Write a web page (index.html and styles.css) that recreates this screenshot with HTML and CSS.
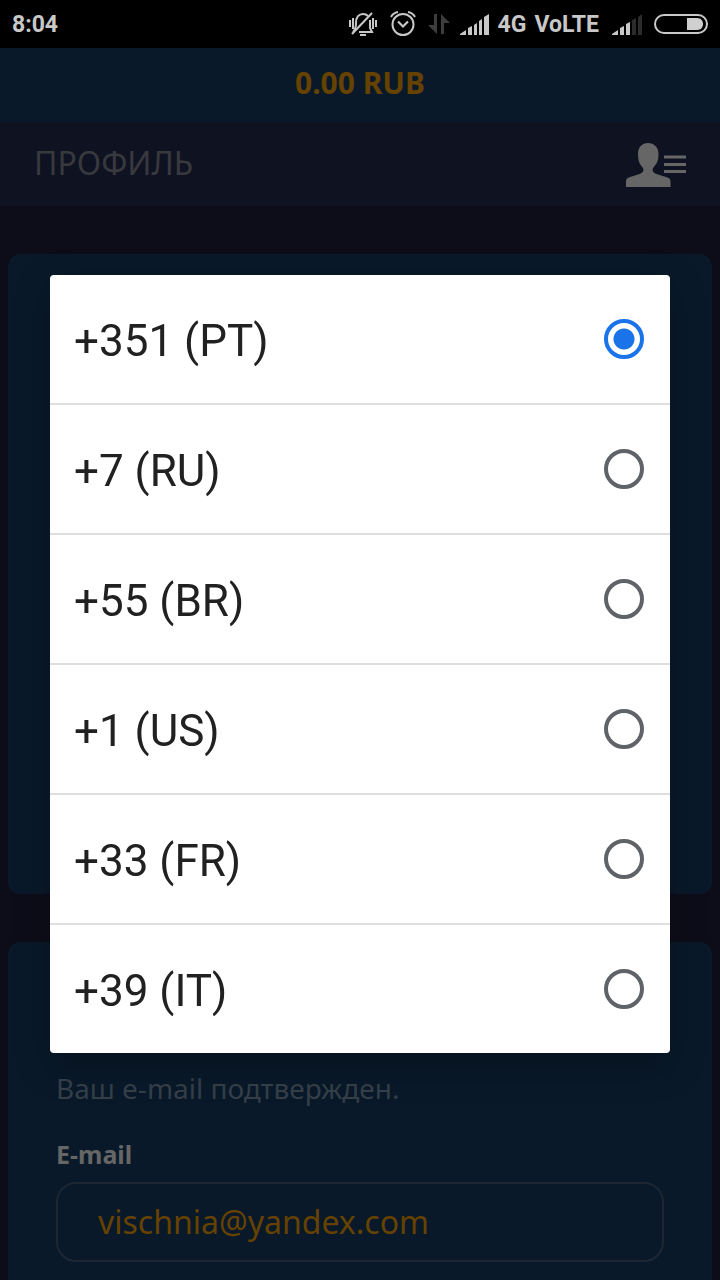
FILE: index.html
```html
<!DOCTYPE html>
<html lang="ru">
<head>
<meta charset="utf-8">
<meta name="viewport" content="width=device-width, initial-scale=1">
<title>Профиль</title>
<link rel="stylesheet" href="styles.css">
</head>
<body>
<div class="status">
  <span class="clock">8:04</span>
  <svg class="silent" width="30" height="26" viewBox="0 0 30 26" fill="none" stroke="#c8c8c8" stroke-width="2">
    <path d="M5 21C8 18 8 15 8 12C8 6 11 3 15 3C17 3 19 4 20 5M22 9V17L24 21H11"/>
    <path d="M4 23L24 2"/>
    <path d="M12 24H18M2 9V16M5 7V18M25 7V18M28 9V16"/>
  </svg>
  <svg class="alarm" width="26" height="26" viewBox="0 0 26 26" fill="none" stroke="#c8c8c8" stroke-width="2">
    <circle cx="13" cy="13.500" r="10.500"/>
    <path d="M8 10.500L13 15.500L18 10.500" stroke-width="2.200"/>
    <path d="M1 6Q3 2 8 1M25 6Q23 2 18 1"/>
  </svg>
  <svg class="data" width="22" height="20" viewBox="0 0 22 20" fill="#3d3d3d">
    <path d="M6 0H9V20L0 11H6ZM13 20H16V9H22L13 0Z"/>
  </svg>
  <svg class="signal" width="30" height="21" viewBox="0 0 30 21" fill="#c8c8c8">
    <path d="M0 21V20L6 16V21ZM8 21V14L12 12V21ZM14 21V11L17 9V21ZM19 21V7L22 5V21ZM24 21V3L29 0V21Z"/>
  </svg>
  <span class="network">4G</span>
  <span class="network">VoLTE</span>
  <svg class="signal2" width="30" height="21" viewBox="0 0 30 21">
    <path fill="#c8c8c8" d="M0 21V20L6 16V21ZM8 21V14L12 12V21ZM14 21V10L18 8V21Z"/>
    <path fill="#2b2b2b" d="M20 21V6L24 4V21ZM26 21V3L30 0V21Z"/>
  </svg>
  <svg class="battery" width="54" height="20" viewBox="0 0 54 20">
    <rect x="1" y="1" width="52" height="18" rx="9" fill="none" stroke="#c8c8c8" stroke-width="2"/>
    <path d="M33 4H43C51 4 51 16 43 16H33Z" fill="#d0d0d0"/>
  </svg>
</div>
<div class="balance">0.00 RUB</div>
<header class="title-bar">
  <h1 class="title">ПРОФИЛЬ</h1>
  <button class="menu" type="button" aria-label="Меню профиля">
    <svg width="60" height="44" viewBox="0 0 60 44">
      <path fill="#666" d="M0 44V38Q0 35 4 34L12 31.500Q17 30 17.500 27Q17.500 25 15 22.500Q12 19 12 11C12 4 16 0 22 0S32.500 4 32.500 11Q32.500 19 29 22.500Q26.500 25 26.500 27Q27 30 32 31.500L40 34Q44.500 35 44.500 38V44Z"/>
      <path d="M38 14H60M38 21.500H60M38 28.500H60" stroke="#666" stroke-width="3"/>
    </svg>
  </button>
</header>
<main class="content">
  <section class="card card-phone"></section>
  <section class="card card-email">
    <p class="note">Ваш e-mail подтвержден.</p>
    <label class="label" for="email">E-mail</label>
    <input class="field" id="email" type="email" value="vischnia@yandex.com">
  </section>
</main>
<div class="overlay">
  <form class="dialog" role="dialog" aria-label="Код страны">
    <label class="option"><span>+351 (PT)</span><input class="radio" type="radio" name="code" checked></label>
    <label class="option"><span>+7 (RU)</span><input class="radio" type="radio" name="code"></label>
    <label class="option"><span>+55 (BR)</span><input class="radio" type="radio" name="code"></label>
    <label class="option"><span>+1 (US)</span><input class="radio" type="radio" name="code"></label>
    <label class="option"><span>+33 (FR)</span><input class="radio" type="radio" name="code"></label>
    <label class="option"><span>+39 (IT)</span><input class="radio" type="radio" name="code"></label>
  </form>
</div>
</body>
</html>
```
FILE: styles.css
```css
* { box-sizing: border-box; }
body {
  margin: 0;
  height: 100vh;
  overflow: hidden;
  display: flex;
  flex-direction: column;
  background: #0c0d18;
  font-family: "Noto Sans", "Open Sans", sans-serif;
}
.status {
  flex: none;
  height: 48px;
  padding: 0 12px;
  display: flex;
  align-items: center;
  background: #000;
  color: #c8c8c8;
  font: 700 23px/48px Roboto, sans-serif;
}
.status svg { flex: none; }
.clock { margin-right: auto; padding-top: 2px; }
.network { margin-right: 8px; padding-top: 2px; }
.silent { margin-right: 12px; }
.alarm { margin-right: 12px; }
.data { margin-right: 10px; }
.signal { margin-right: 8px; }
.signal2 { margin: 0 12px 0 5px; }
.balance {
  flex: none;
  height: 74px;
  background: #091929;
  color: #664200;
  font-size: 30px;
  font-weight: 700;
  line-height: 70px;
  text-align: center;
}
.title-bar {
  flex: none;
  height: 84px;
  padding: 2px 34px 0;
  display: flex;
  align-items: center;
  justify-content: space-between;
  background: #0f1220;
}
.title {
  margin: 0;
  padding-bottom: 4px;
  color: #37393f;
  font-size: 32px;
  font-weight: 400;
  line-height: 76px;
}
.menu {
  padding: 0;
  border: 0;
  background: none;
}
.menu svg { display: block; }
.content {
  flex: 1;
  display: flex;
  flex-direction: column;
  gap: 48px;
  padding: 48px 8px 0;
}
.card {
  flex: none;
  border-radius: 12px;
  background: #091929;
}
.card-phone { min-height: 640px; }
.card-email {
  min-height: 400px;
  padding: 126px 48px 48px;
}
.note {
  margin: 0 0 26px;
  color: #343f49;
  font-size: 28px;
  line-height: 40px;
}
.label {
  display: block;
  margin-bottom: 8px;
  color: #666;
  font-size: 25px;
  font-weight: 700;
  line-height: 40px;
}
.field {
  display: block;
  width: 100%;
  height: 80px;
  padding: 0 40px 2px;
  border: 2px solid #1c2733;
  border-radius: 20px;
  outline: 0;
  background: transparent;
  color: #664200;
  font-family: inherit;
  font-size: 32px;
}
.overlay {
  position: fixed;
  inset: 48px 0 0;
  display: flex;
  align-items: center;
  padding: 0 50px;
}
.dialog {
  flex: 1;
  overflow: hidden;
  border-radius: 4px;
  background: #fff;
  box-shadow: 0 12px 36px rgba(0, 0, 0, 0.25);
  color: #212121;
  font: 400 44px/52px Roboto, sans-serif;
}
.option {
  display: flex;
  align-items: center;
  justify-content: space-between;
  padding: 38px 26px 38px 24px;
}
.option + .option { border-top: 2px solid #dedede; }
.option span { padding-top: 2px; margin-bottom: -2px; }
.radio {
  appearance: none;
  width: 40px;
  height: 40px;
  margin: 0;
  border: 4px solid #5f6368;
  border-radius: 50%;
}
.radio:checked {
  border-color: #1a73e8;
  background: radial-gradient(circle, #1a73e8 0 10px, transparent 11px);
}
```
